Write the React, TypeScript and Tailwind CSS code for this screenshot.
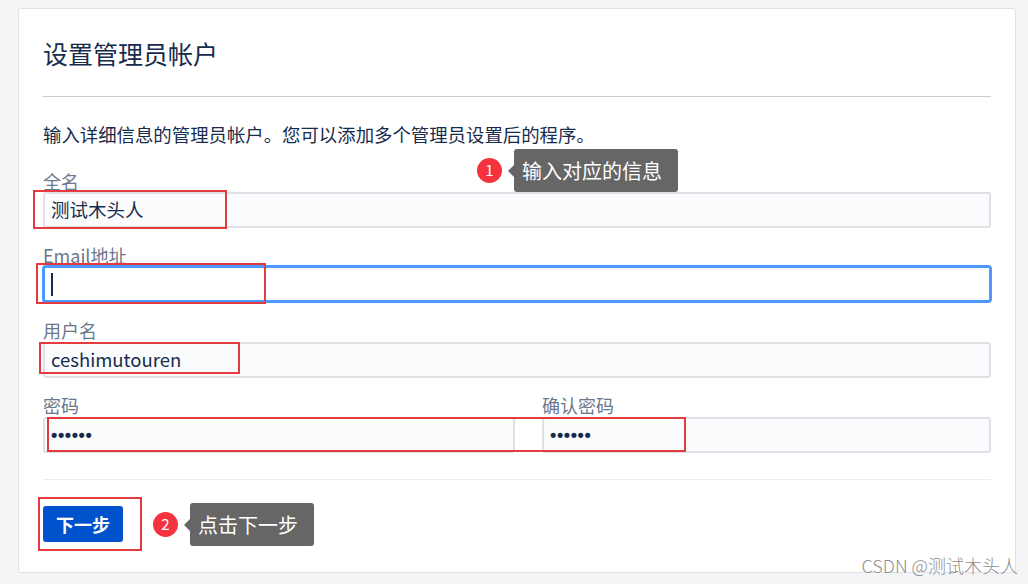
import React from 'react';

const font = { fontFamily: '"Noto Sans CJK SC", "Noto Sans", sans-serif' };

// red annotation rectangle drawn over the form
const Mark = ({ className }: { className: string }) => (
  <div className={`absolute border-2 border-[#e53a40] pointer-events-none ${className}`} />
);

const Tip = ({ n, text, className }: { n: number; text: string; className: string }) => (
  <div className={`absolute flex items-center ${className}`}>
    <div className="w-[25px] h-[25px] rounded-full bg-[#f5333f] text-white text-[15px] flex items-center justify-center">
      {n}
    </div>
    <div className="relative ml-[12px] h-[43px] pl-[8px] pr-[16px] rounded-[3px] bg-[#666666] text-white text-[20px] leading-[43px]">
      <span className="absolute left-[-6px] top-1/2 -translate-y-1/2 w-0 h-0 border-y-[6px] border-y-transparent border-r-[6px] border-r-[#666666]" />
      {text}
    </div>
  </div>
);

const Label = ({ children }: { children: React.ReactNode }) => (
  <div className="text-[18px] leading-[20px] text-[#6b778c]">{children}</div>
);

const Field = ({ children, focused }: { children?: React.ReactNode; focused?: boolean }) => (
  <div
    className={
      focused
        ? 'h-[36px] rounded-[3px] border-2 border-[#4c9aff] shadow-[0_0_0_1px_#4c9aff] bg-white px-[6px] flex items-center'
        : 'h-[36px] rounded-[3px] border-2 border-[#dfe1e6] bg-[#fafbfc] px-[6px] flex items-center text-[18.5px] text-[#172b4d]'
    }
  >
    {children}
  </div>
);

const Dots = () => (
  <span
    className="text-[18px] font-bold tracking-[0.6px] text-[#172b4d]"
    style={{ fontFamily: '"Liberation Sans", Arial, sans-serif' }}
  >
    ••••••
  </span>
);

export default function App() {
  return (
    <div className="relative w-[1028px] h-[584px] bg-[#f4f5f7] overflow-hidden pt-[8px] pl-[18px]" style={font}>
      <div className="relative w-[998px] h-[565px] bg-white border border-[#dfe1e6] rounded-[3px] px-[24px] pt-[28px]">
        <h1 className="text-[25px] leading-[32px] text-[#172b4d]">设置管理员帐户</h1>
        <div className="mt-[27px] border-t border-[#cccccc]" />
        <p className="mt-[25px] text-[18.4px] leading-[24px] text-[#172b4d]">
          输入详细信息的管理员帐户。您可以添加多个管理员设置后的程序。
        </p>

        <div className="mt-[25px]">
          <Label>全名</Label>
          <div className="mt-[1px]">
            <Field>测试木头人</Field>
          </div>
        </div>

        <div className="mt-[17px]">
          <Label>Email地址</Label>
          <div className="mt-[1px]">
            <Field focused>
              <span className="w-[2px] h-[23px] bg-[#172b4d]" />
            </Field>
          </div>
        </div>

        <div className="mt-[18px]">
          <Label>用户名</Label>
          <div className="mt-[2px]">
            <Field>ceshimutouren</Field>
          </div>
        </div>

        <div className="mt-[17px] flex gap-[27px]">
          <div className="w-[472px]">
            <Label>密码</Label>
            <div className="mt-[2px]">
              <Field>
                <Dots />
              </Field>
            </div>
          </div>
          <div className="flex-1">
            <Label>确认密码</Label>
            <div className="mt-[2px]">
              <Field>
                <Dots />
              </Field>
            </div>
          </div>
        </div>

        <div className="mt-[26px] border-t border-[#ebecf0]" />

        <button className="mt-[26px] w-[80px] h-[36px] rounded-[3px] bg-[#0052cc] text-white text-[18px] font-bold">
          下一步
        </button>

        <Mark className="left-[14px] top-[181px] w-[194px] h-[39px]" />
        <Mark className="left-[17px] top-[254px] w-[230px] h-[41px]" />
        <Mark className="left-[20px] top-[333px] w-[201px] h-[32px]" />
        <Mark className="left-[28px] top-[408px] w-[639px] h-[35px]" />
        <Mark className="left-[19px] top-[488px] w-[104px] h-[54px]" />

        <Tip n={1} text="输入对应的信息" className="left-[458px] top-[140px]" />
        <Tip n={2} text="点击下一步" className="left-[134px] top-[494px]" />
      </div>

      <div className="absolute right-[10px] bottom-[10px] text-[18px] leading-[18px] font-light text-[#8f8f8f] [text-shadow:0_0_2px_#fff]">
        CSDN @测试木头人
      </div>
    </div>
  );
}
